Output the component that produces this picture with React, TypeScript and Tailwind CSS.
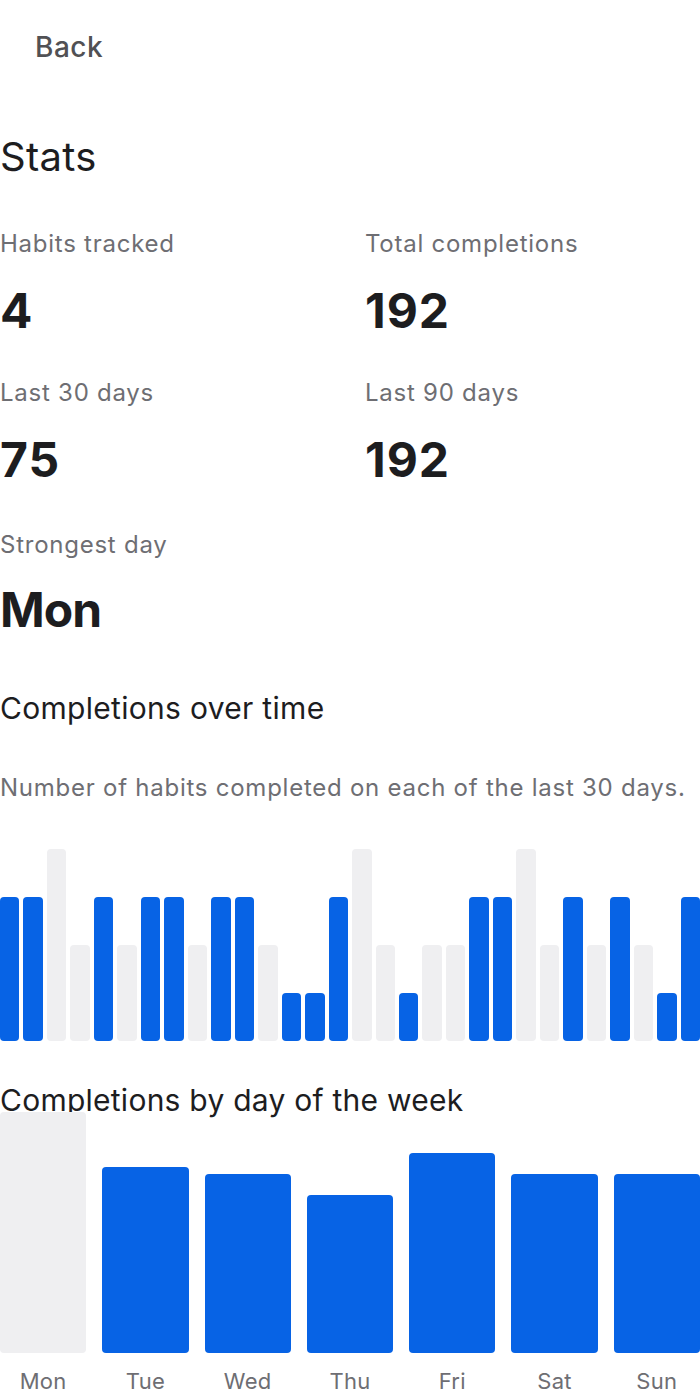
import React from 'react';

type DayBar = { value: number; muted: boolean };

// last 30 days, one entry per day
const DAILY: DayBar[] = [
  { value: 3, muted: false },
  { value: 3, muted: false },
  { value: 4, muted: true },
  { value: 2, muted: true },
  { value: 3, muted: false },
  { value: 2, muted: true },
  { value: 3, muted: false },
  { value: 3, muted: false },
  { value: 2, muted: true },
  { value: 3, muted: false },
  { value: 3, muted: false },
  { value: 2, muted: true },
  { value: 1, muted: false },
  { value: 1, muted: false },
  { value: 3, muted: false },
  { value: 4, muted: true },
  { value: 2, muted: true },
  { value: 1, muted: false },
  { value: 2, muted: true },
  { value: 2, muted: true },
  { value: 3, muted: false },
  { value: 3, muted: false },
  { value: 4, muted: true },
  { value: 2, muted: true },
  { value: 3, muted: false },
  { value: 2, muted: true },
  { value: 3, muted: false },
  { value: 2, muted: true },
  { value: 1, muted: false },
  { value: 3, muted: false },
];

const WEEKDAYS = [
  { label: 'Mon', value: 35 },
  { label: 'Tue', value: 27 },
  { label: 'Wed', value: 26 },
  { label: 'Thu', value: 23 },
  { label: 'Fri', value: 29 },
  { label: 'Sat', value: 26 },
  { label: 'Sun', value: 26 },
];

const StatBlock: React.FC<{ label: string; value: string }> = ({ label, value }) => (
  <div>
    <p className="text-[24px] leading-[32px] tracking-[0.75px] text-[#6e6e73]">{label}</p>
    <p className="mt-[23px] text-[48px] leading-[56px] font-bold tracking-[1px] text-[#1d1d1f]">{value}</p>
  </div>
);

export default function App() {
  const dailyMax = 4;
  const weekMax = Math.max(...WEEKDAYS.map((d) => d.value));

  return (
    <div className="w-[700px] bg-white pb-2" style={{ fontFamily: 'Inter, "Noto Sans", sans-serif' }}>
      {/* Header */}
      <button className="mt-[22px] px-[35px] py-2 text-[28px] leading-[34px] font-medium tracking-[0.5px] text-[#515154]">
        Back
      </button>

      <h1 className="mt-[61px] text-[40px] leading-[48px] tracking-[0.3px] text-[#1d1d1f]">Stats</h1>

      {/* Summary numbers */}
      <div className="mt-[47px] grid grid-cols-2 gap-x-[30px] gap-y-[38px]">
        <StatBlock label="Habits tracked" value="4" />
        <StatBlock label="Total completions" value="192" />
        <StatBlock label="Last 30 days" value="75" />
        <StatBlock label="Last 90 days" value="192" />
      </div>

      <div className="mt-[41px]">
        <p className="text-[24px] leading-[32px] tracking-[0.75px] text-[#6e6e73]">Strongest day</p>
        <p className="mt-[21px] text-[48px] leading-[56px] font-bold tracking-[-1px] text-[#1d1d1f]">Mon</p>
      </div>

      {/* Daily chart */}
      <h2 className="mt-[52px] text-[30px] leading-[36px] tracking-[0.3px] text-[#1d1d1f]">Completions over time</h2>
      <p className="mt-[46px] text-[24px] leading-[32px] tracking-[0.75px] text-[#6e6e73]">
        Number of habits completed on each of the last 30 days.
      </p>
      <div className="mt-[45px] flex h-[192px] items-end gap-[4px]">
        {DAILY.map((d, i) => (
          <div
            key={i}
            className={d.muted ? 'flex-1 rounded-[4px] bg-[#efeff1]' : 'flex-1 rounded-[4px] bg-[#0763e5]'}
            style={{ height: `${(d.value / dailyMax) * 100}%` }}
          />
        ))}
      </div>

      {/* Weekday chart */}
      <h2 className="mt-[44px] text-[30px] leading-[30px] tracking-[0.25px] text-[#1d1d1f]">
        Completions by day of the week
      </h2>
      <div className="mt-[-3px] flex gap-4">
        {WEEKDAYS.map((d) => (
          <div key={d.label} className="flex flex-1 flex-col items-center">
            <div className="flex h-[241px] w-full items-end">
              <div
                className={
                  d.value === weekMax
                    ? 'w-full rounded-[4px] bg-[#efeff1]'
                    : 'w-full rounded-[4px] bg-[#0763e5]'
                }
                style={{ height: `${(d.value / weekMax) * 100}%` }}
              />
            </div>
            <span className="mt-[14px] text-[22px] leading-[28px] tracking-[0.3px] text-[#6e6e73]">{d.label}</span>
          </div>
        ))}
      </div>
    </div>
  );
}
